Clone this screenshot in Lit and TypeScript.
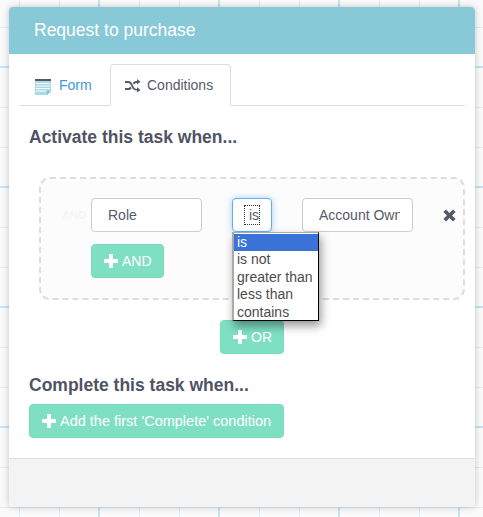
import { LitElement, html, css, svg } from 'lit';
import { customElement } from 'lit/decorators.js';

const plusIcon = svg`<path d="M5 0h4v5h5v4H9v5H5V9H0V5h5z" fill="currentColor" />`;

@customElement('app-root')
export class AppRoot extends LitElement {
  static styles = css`
    :host {
      display: block;
      width: 483px;
      height: 517px;
      overflow: hidden;
      box-sizing: border-box;
      padding: 7px 8px 10px 9px;
      font-family: 'Liberation Sans', Arial, sans-serif;
      font-size: 14px;
      color: #555a68;
      background-color: #fafafa;
      background-image:
        linear-gradient(#c4e3f5 2px, transparent 2px),
        linear-gradient(90deg, #c4e3f5 2px, transparent 2px),
        linear-gradient(#dcedf8 1px, transparent 1px),
        linear-gradient(90deg, #dcedf8 1px, transparent 1px);
      background-size: 120px 120px, 120px 120px, 40px 40px, 40px 40px;
      background-position: 0 66px, 98px 0, 0 27px, 19px 0;
    }
    .card {
      position: relative;
      display: flex;
      flex-direction: column;
      height: 500px;
      background: #fff;
      border-radius: 4px;
      overflow: hidden;
      box-shadow: 0 0 7px rgba(0, 0, 0, 0.22);
    }
    .header {
      height: 47px;
      flex: none;
      display: flex;
      align-items: center;
      padding-left: 25px;
      background: #88c9d7;
      color: #fff;
      font-size: 17.5px;
    }
    .body {
      flex: 1;
      padding: 10px 10px 0 20px;
    }
    .tabs {
      display: flex;
      height: 41px;
      margin-left: -10px;
      padding-left: 10px;
      border-bottom: 1px solid #ddd;
    }
    .tab {
      display: flex;
      align-items: center;
      gap: 6px;
      height: 42px;
      box-sizing: border-box;
      padding: 0 14px;
      border: 1px solid transparent;
    }
    .tab.form {
      color: #3d97e2;
      width: 81px;
      padding-left: 5px;
    }
    .tab.form svg {
      margin-top: 4px;
    }
    .tab.active {
      width: 121px;
      background: #fff;
      border-color: #ddd;
      border-bottom-color: #fff;
      border-radius: 4px 4px 0 0;
    }
    h2 {
      margin: 0;
      font-size: 17.5px;
      line-height: 20px;
      font-weight: bold;
      color: #4f5464;
    }
    .activate {
      margin-top: 21px;
    }
    .group {
      margin: 30px 0 0 10px;
      height: 123px;
      box-sizing: border-box;
      width: 426px;
      padding: 19px 0 0 21px;
      border: 2px dashed #dddddd;
      border-radius: 11px;
      background: #fcfcfc;
    }
    .row {
      display: flex;
      align-items: center;
    }
    .ghost {
      width: 29px;
      font-size: 11px;
      font-weight: bold;
      color: #f6f6f6;
    }
    .field {
      box-sizing: border-box;
      height: 34px;
      width: 111px;
      padding-left: 16px;
      display: flex;
      align-items: center;
      background: #fff;
      border: 1px solid #ccc;
      border-radius: 4px;
      overflow: hidden;
      white-space: nowrap;
    }
    .op {
      position: relative;
      flex: none;
      box-sizing: border-box;
      width: 40px;
      height: 34px;
      margin: 0 30px;
      display: flex;
      align-items: center;
      justify-content: center;
      background: #fff;
      border: 1px solid #66afe9;
      border-radius: 4px;
      box-shadow: 0 0 6px rgba(102, 175, 233, 0.6);
    }
    .focus {
      outline: 1px dotted #333;
      padding-left: 4px;
      line-height: 18px;
    }
    .menu {
      position: absolute;
      z-index: 2;
      left: -1px;
      top: 33px;
      width: 87px;
      height: 89px;
      box-sizing: border-box;
      padding-top: 1px;
      background: #fff;
      border: 1px solid #000;
      border-left: 2px solid #aaa;
      border-top: 1px solid #aaa;
      box-shadow: 2px 5px 9px rgba(0, 0, 0, 0.4);
      color: #4b4b4b;
    }
    .menu div {
      height: 17.4px;
      line-height: 17.4px;
      padding-left: 3px;
      white-space: nowrap;
    }
    .menu .selected {
      background: #3a72d8;
      color: #fff;
    }
    .value {
      padding-left: 16px;
      padding-right: 12px;
    }
    .value span {
      display: block;
      overflow: hidden;
    }
    .remove {
      width: 13px;
      height: 13px;
      margin-left: 30px;
      color: #555a68;
    }
    .btn {
      display: inline-flex;
      align-items: center;
      gap: 4px;
      box-sizing: border-box;
      height: 34px;
      padding: 0 11px 0 12px;
      background: #7fe0c1;
      border: 1px solid #77dbbb;
      border-radius: 4px;
      color: #fff;
      white-space: nowrap;
    }
    .btn svg {
      width: 14px;
      height: 14px;
      flex: none;
    }
    .and {
      margin: 12px 0 0 29px;
    }
    .or-row {
      padding-left: 191px;
      margin-top: 20px;
    }
    .complete {
      margin-top: 21px;
    }
    .add {
      margin-top: 9px;
      width: 255px;
      font-size: 14.5px;
    }
    .footer {
      flex: none;
      height: 49px;
      background: #f3f3f3;
      border-top: 1px solid #ddd;
      box-sizing: border-box;
    }
  `;

  render() {
    return html`
      <div class="card">
        <div class="header">Request to purchase</div>
        <div class="body">
          <div class="tabs">
            <div class="tab form">
              <svg width="18" height="16" viewBox="0 0 18 16">
                <path d="M0 0h16v2H0z" fill="#555a68" />
                <path d="M0 2h16v10l-4 4H0z" fill="#a8dbe6" />
                <path d="M1 4.500h14M1 7h14M1 9.500h14M1 12h10" stroke="#fff" stroke-width="1" />
                <path d="M12 16v-4h4z" fill="#7fc0cf" />
              </svg>
              Form
            </div>
            <div class="tab active">
              <svg width="16" height="13" viewBox="0 0 16 13">
                <path
                  d="M0 2h3c3 0 4 2 5 4.500s2 3.500 4 3.500v-2l3.500 3-3.500 2.500v-2c-3 0-4.500-1.500-5.500-4S4.500 4 3 4H0zM0 9h3c1 0 1.800-.6 2.400-1.500l1.200 2C5.700 10.500 4.500 11 3 11H0zM12 2V0l3.500 2.800L12 5.500V4c-1.500 0-2.400.7-3 1.700L7.800 3.600C8.800 2.600 10.200 2 12 2z"
                  fill="#555a68"
                />
              </svg>
              Conditions
            </div>
          </div>
          <h2 class="activate">Activate this task when...</h2>
          <div class="group">
            <div class="row">
              <span class="ghost">AND</span>
              <div class="field">Role</div>
              <div class="op">
                <span class="focus">is</span>
                <div class="menu">
                  <div class="selected">is</div>
                  <div>is not</div>
                  <div>greater than</div>
                  <div>less than</div>
                  <div>contains</div>
                </div>
              </div>
              <div class="field value"><span>Account Owner</span></div>
              <svg class="remove" viewBox="0 0 13 13">
                <path
                  d="M3 .4 6.500 3.900 10 .4 12.600 3 9.100 6.500 12.600 10 10 12.600 6.500 9.100 3 12.600.4 10 3.900 6.500.4 3z"
                  fill="currentColor"
                />
              </svg>
            </div>
            <div class="btn and">
              <svg viewBox="0 0 14 14">${plusIcon}</svg>
              AND
            </div>
          </div>
          <div class="or-row">
            <div class="btn">
              <svg viewBox="0 0 14 14">${plusIcon}</svg>
              OR
            </div>
          </div>
          <h2 class="complete">Complete this task when...</h2>
          <div class="btn add">
            <svg viewBox="0 0 14 14">${plusIcon}</svg>
            Add the first 'Complete' condition
          </div>
        </div>
        <div class="footer"></div>
      </div>
    `;
  }
}
